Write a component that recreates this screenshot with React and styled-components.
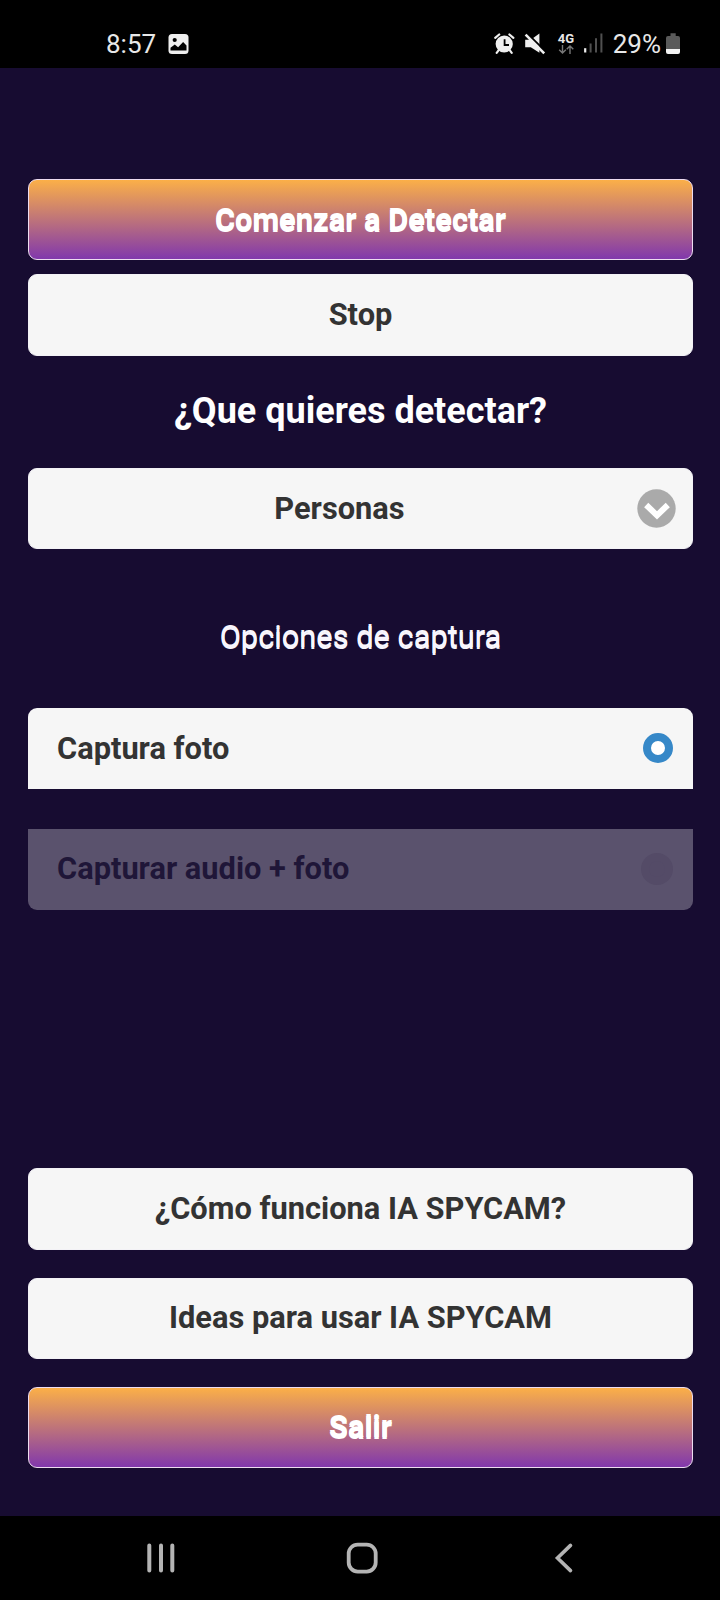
import React from 'react';
import styled, { createGlobalStyle, css } from 'styled-components';

const GlobalStyle = createGlobalStyle`
  * { box-sizing: border-box; }
  body { margin: 0; background: #160b30; }
`;

const Screen = styled.div`
  display: flex;
  flex-direction: column;
  width: 720px;
  height: 1600px;
  background: #170c31;
  font-family: Roboto, "Liberation Sans", sans-serif;
`;

const StatusBar = styled.header`
  display: flex;
  justify-content: space-between;
  flex: none;
  height: 68px;
  padding: 33px 40px 0 106px;
  background: #000;
  color: #e8e8e8;
`;

const StatusGroup = styled.div`
  display: flex;
  align-items: flex-start;
`;

const StatusText = styled.span`
  margin-left: ${({ $gap }) => $gap || 0}px;
  font-size: 26px;
  line-height: 22px;
`;

const StatusIcon = styled.svg`
  display: block;
  flex: none;
  margin-left: ${({ $gap }) => $gap || 0}px;
`;

const Network = styled.div`
  display: flex;
  flex-direction: column;
  width: 17px;
  margin-left: 12px;
  font-size: 13px;
  font-weight: 700;
  line-height: 11px;
`;

const Content = styled.main`
  display: flex;
  flex-direction: column;
  flex: 1;
  padding: 111px 27px 48px 28px;
`;

const Button = styled.button`
  display: flex;
  align-items: center;
  justify-content: center;
  flex: none;
  width: 100%;
  height: ${({ $height }) => $height || 81}px;
  margin: 0 0 ${({ $after }) => $after || 0}px;
  padding: 0 0 ${({ $lift }) => $lift || 1}px;
  border: 1px solid #f3f2f6;
  border-radius: 9px;
  background: #f6f6f6;
  color: #333;
  font: 700 30.8px/39px Roboto, "Liberation Sans", sans-serif;
  ${({ $accent }) => $accent && css`
    border-color: #eddcf0;
    background: linear-gradient(#fbaf48, #8138ac);
    color: #fff;
    text-shadow: 0 2px 0 #fff;
  `}
`;

const Heading = styled.h2`
  display: flex;
  align-items: center;
  justify-content: center;
  flex: none;
  height: 112px;
  margin: 0;
  padding-bottom: 3px;
  color: #fff;
  font-size: 36px;
  font-weight: 700;
`;

const Select = styled(Button)`
  padding: 0 16px 0 0;
`;

const SelectValue = styled.span`
  flex: 1;
  padding: 0 0 0 13px;
  text-align: center;
`;

const Legend = styled.div`
  display: flex;
  align-items: center;
  justify-content: center;
  flex: none;
  height: 159px;
  padding-top: 15px;
  color: #f8f6fd;
  font-size: 30.8px;
  text-shadow: 0 2px 0 #f8f6fd;
`;

const Options = styled.div`
  display: flex;
  flex-direction: column;
  gap: 40px;
  flex: none;
`;

const Option = styled.label`
  display: flex;
  align-items: center;
  justify-content: space-between;
  height: 81px;
  padding: 0 20px 0 29px;
  border-radius: ${({ $disabled }) => ($disabled ? '0 0 9px 9px' : '9px 9px 0 0')};
  background: ${({ $disabled }) => ($disabled ? '#5a526d' : '#f6f6f6')};
  color: ${({ $disabled }) => ($disabled ? '#1f1638' : '#333')};
  font-size: 30.8px;
  font-weight: 700;
`;

const OptionText = styled.span`
  padding-bottom: ${({ $lift }) => $lift || 1}px;
`;

const Radio = styled.span`
  width: ${({ $on }) => ($on ? 30 : 32)}px;
  height: ${({ $on }) => ($on ? 30 : 32)}px;
  margin-top: -1px;
  border-radius: 50%;
  border: 8px solid ${({ $on }) => ($on ? '#3688c8' : '#544b67')};
  background: ${({ $on }) => ($on ? '#fff' : '#544b67')};
`;

const Footer = styled.div`
  display: flex;
  flex-direction: column;
  margin-top: auto;
`;

const NavBar = styled.nav`
  display: flex;
  align-items: flex-start;
  justify-content: space-between;
  flex: none;
  height: 84px;
  padding: 26px 146px 0 146px;
  background: #000;
`;

const HomeIcon = styled.svg`
  margin-right: 6px;
`;

export default function App() {
  return (
    <Screen>
      <GlobalStyle />
      <StatusBar>
        <StatusGroup>
          <StatusText>8:57</StatusText>
          <StatusIcon $gap={12} width="21" height="22" viewBox="0 0 21 22">
            <rect x="0.5" y="1" width="20" height="20" rx="3.5" fill="#efefef" />
            <circle cx="6.7" cy="7" r="2.1" fill="#000" />
            <path d="M2.5 17.5v-2.8l4.3-3.2 3.3 2.8 5-5.2 3.4 3.3v5.1z" fill="#000" />
          </StatusIcon>
        </StatusGroup>
        <StatusGroup>
          <StatusIcon width="21" height="22" viewBox="0 0 21 22">
            <circle cx="10.2" cy="11" r="8.6" fill="#efefef" />
            <path d="M1.2 4.8 5.2 1.5M15.4 1.5l4 3.3M4.7 17.2l-2 2.6M15.7 17.2l2 2.6" stroke="#efefef" strokeWidth="2.2" strokeLinecap="round" />
            <path d="M10.6 6.3v5.7h4.4" fill="none" stroke="#000" strokeWidth="1.8" />
          </StatusIcon>
          <StatusIcon $gap={9} width="22" height="22" viewBox="0 0 22 22">
            <path d="M1.2 6.8h5.6L15.4.6v19.2l-8.6-5.5H1.2z" fill="#efefef" />
            <path d="M3.3.5 22 18.9" stroke="#000" strokeWidth="2" />
            <path d="M1.6 1.7 20.2 20.3" stroke="#efefef" strokeWidth="2.6" />
          </StatusIcon>
          <Network>
            4G
            <svg width="17" height="11" viewBox="0 0 17 11">
              <path d="M4.5 1v8M1.2 5.8l3.3 3.3 3.3-3.3M12 10V1.9M8.7 5.2 12 1.9l3.3 3.3" fill="none" stroke="#777" strokeWidth="1.4" />
            </svg>
          </Network>
          <StatusIcon $gap={9} width="20" height="22" viewBox="0 0 20 22">
            <path d="M1.2 15.2v4.3" stroke="#efefef" strokeWidth="2.2" />
            <path d="M6.6 10.4v9.1M12 5.2v14.3M17.4.4v19.1" stroke="#505050" strokeWidth="2" />
          </StatusIcon>
          <StatusText $gap={9}>29%</StatusText>
          <StatusIcon $gap={5} width="14" height="22" viewBox="0 0 14 22">
            <path d="M4.5.2h5.2V3h2.3Q14 3 14 5v12H0V5q0-2 2-2h2.5z" fill="#5a5a5a" />
            <path d="M0 16h14v3q0 2-2 2H2q-2 0-2-2z" fill="#f2f2f2" />
          </StatusIcon>
        </StatusGroup>
      </StatusBar>

      <Content>
        <Button $accent $after={14}>Comenzar a Detectar</Button>
        <Button $height={82}>Stop</Button>
        <Heading>¿Que quieres detectar?</Heading>
        <Select>
          <SelectValue>Personas</SelectValue>
          <svg width="39" height="39" viewBox="0 0 39 39">
            <circle cx="19.5" cy="19.5" r="19.2" fill="#aaa" />
            <path d="M9.2 16 20 26.3 30.8 16" fill="none" stroke="#fff" strokeWidth="6" />
          </svg>
        </Select>
        <Legend>Opciones de captura</Legend>
        <Options>
          <Option>
            <OptionText>Captura foto</OptionText>
            <Radio $on />
          </Option>
          <Option $disabled>
            <OptionText $lift={3}>Capturar audio + foto</OptionText>
            <Radio />
          </Option>
        </Options>
        <Footer>
          <Button $height={82} $after={28}>¿Cómo funciona IA SPYCAM?</Button>
          <Button $after={28} $lift={3}>Ideas para usar IA SPYCAM</Button>
          <Button $accent $lift={3}>Salir</Button>
        </Footer>
      </Content>

      <NavBar>
        <svg width="30" height="32" viewBox="0 0 30 32">
          <path d="M3.3 3.4v25.2M15 3.4v25.2M26.3 3.4v25.2" stroke="#b4b4b4" strokeWidth="4" strokeLinecap="round" />
        </svg>
        <HomeIcon width="32" height="32" viewBox="0 0 32 32">
          <rect x="2.7" y="2.6" width="27" height="27" rx="9" fill="none" stroke="#b4b4b4" strokeWidth="3.8" />
        </HomeIcon>
        <svg width="20" height="32" viewBox="0 0 20 32">
          <path d="M16.5 3.4 3.5 16l13 12.6" fill="none" stroke="#b4b4b4" strokeWidth="3.6" strokeLinecap="round" />
        </svg>
      </NavBar>
    </Screen>
  );
}
